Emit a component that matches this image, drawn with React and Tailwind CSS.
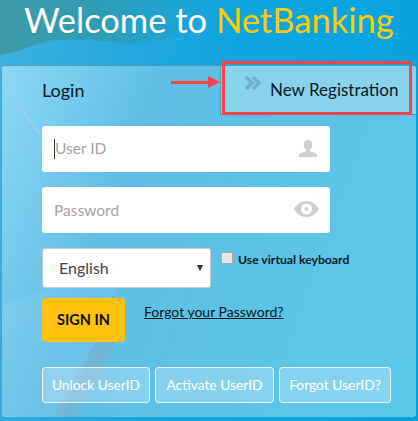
import React from "react";

const font = "font-['Lato','Open_Sans',sans-serif]";

function ActionBtn({ w, children }) {
  return (
    <div className={`${w} h-[36px] flex items-center justify-center rounded-[4px] border border-white/80 bg-white/25 text-[13.800px] text-white`}>
      {children}
    </div>
  );
}

export default function App() {
  return (
    <div className={`${font} relative w-[418px] h-[421px] overflow-hidden bg-[linear-gradient(100deg,#3fb0e0_0%,#28a8de_25%,#0ea5df_50%,#08a6e2_75%,#0aa0d8_100%)]`}>
      <svg width="418" height="70" viewBox="0 0 418 70" className="absolute left-0 top-0">
        <defs>
          <linearGradient id="teal" x1="0" y1="0" x2="1" y2="0">
            <stop offset="0" stopColor="#3f9aa8" />
            <stop offset="0.4" stopColor="#2f9cb6" />
            <stop offset="1" stopColor="#10a4dc" stopOpacity="0" />
          </linearGradient>
        </defs>
        <path d="M0 0H250C230 20 190 38 130 44C100 40 70 38 48 41C30 46 15 53 0 55Z" fill="url(#teal)" />
      </svg>

      <h1 className="relative h-[65px] pl-[24px] text-[34.500px] leading-[39px] text-white whitespace-nowrap">
        Welcome to <span className="text-[#ffcc00]">NetBanking</span>
      </h1>

      <div className="relative mx-[2px] h-[352px] overflow-hidden rounded-[3px] border-t border-[#4d9dbd] bg-[linear-gradient(110deg,#8cd8f4_0%,#5fbde6_30%,#5cc3e6_60%,#5cc8ec_100%)]">
        <svg width="414" height="352" viewBox="0 0 414 352" className="absolute left-0 top-0">
          <path d="M4 22L38 68" stroke="#a8cfe2" strokeWidth="2" fill="none" opacity="0.7" />
          <path d="M0 240L130 190L60 352H0Z" fill="#9fd6ee" opacity="0.2" />
          <path d="M50 352L100 265L120 270L72 352Z" fill="#8aa9bb" opacity="0.35" />
        </svg>

        <div className="relative flex h-[49px]">
          <div className="w-[218px] pl-[40px] pt-[12px] text-[18px] leading-[24px] text-[#0b1a24]">Login</div>
          <div className="flex-1 border-l border-b border-[#5b94ad] bg-[#88d3ec] pl-[23px] pt-[10px]">
            <div className="flex items-start text-[#0b1a24]">
              <svg width="18" height="14" viewBox="0 0 18 14" className="shrink-0" fill="none" stroke="#6fb0c8" strokeWidth="3.500">
                <path d="M2 1l6 6-6 6M9 1l6 6-6 6" />
              </svg>
              <span className="ml-[8px] mt-[2px] text-[17px] leading-[24px] whitespace-nowrap">New Registration</span>
            </div>
          </div>
        </div>

        <div className="relative pl-[40px] pt-[11px]">
          <div className="flex h-[46px] w-[288px] items-center justify-between rounded-[3px] bg-white pl-[12px] pr-[12px]">
            <div className="flex items-center text-[15.500px] text-[#a3a3a3]">
              <span className="h-[20px] w-px bg-[#333]" />
              <span>User ID</span>
            </div>
            <svg width="20" height="20" viewBox="0 0 20 20" fill="#cfcfcf">
              <path d="M10 1c-3 0-4.400 2.200-4.200 5 .1 2 .9 3.600 2.200 4.600v1.600c-2.600.9-6.500 1.800-7 3.800v2h18v-2c-.5-2-4.400-2.900-7-3.800v-1.600c1.300-1 2.100-2.600 2.200-4.600.2-2.800-1.200-5-4.200-5z" />
            </svg>
          </div>

          <div className="mt-[15px] flex h-[46px] w-[288px] items-center justify-between rounded-[3px] bg-white pl-[12px] pr-[11px]">
            <span className="mt-[2px] text-[15.500px] text-[#a3a3a3]">Password</span>
            <svg width="25" height="16" viewBox="0 0 25 16" fill="#cfcfcf" className="mb-[2px]">
              <path fillRule="evenodd" d="M12.500 0C7 0 2.500 3.500 0 8c2.500 4.500 7 8 12.500 8S22.500 12.500 25 8c-2.500-4.500-7-8-12.500-8zm0 2.500a5.500 5.500 0 1 1 0 11 5.500 5.500 0 0 1 0-11zm0 3.500a2 2 0 1 0 0 4 2 2 0 0 0 0-4z" />
            </svg>
          </div>

          <div className="mt-[15px] flex items-start">
            <div className="flex h-[40px] w-[169px] items-center justify-between rounded-[3px] border border-[#c8c8c8] bg-white pl-[16px] pr-[7px] pb-[1px] text-[16px] text-[#444]">
              <span>English</span>
              <svg width="6" height="6" viewBox="0 0 6 6" fill="#333"><path d="M0 0h6L3 6z" /></svg>
            </div>
            <div className="ml-[10px] mt-[4px] h-[12px] w-[12px] rounded-[2px] border border-[#aaa] bg-[#e6e6e6]" />
            <span className="ml-[5px] mt-[3px] text-[12.200px] leading-[18px] font-bold text-[#0b1a24] whitespace-nowrap">Use virtual keyboard</span>
          </div>

          <div className="mt-[10px] flex items-start">
            <div className="flex h-[44px] w-[83px] items-center justify-center rounded-[4px] bg-[#ffc20e] text-[14.500px] font-bold text-[#111]">SIGN IN</div>
            <a className="ml-[19px] mt-[4px] text-[14px] leading-[20px] text-[#0b1a24] underline whitespace-nowrap">Forgot your Password?</a>
          </div>

          <div className="mt-[25px] flex gap-[5px]">
            <ActionBtn w="w-[108px]">Unlock UserID</ActionBtn>
            <ActionBtn w="w-[119px]">Activate UserID</ActionBtn>
            <ActionBtn w="w-[112px]">Forgot UserID?</ActionBtn>
          </div>
        </div>
      </div>

      <div className="absolute left-[222px] top-[61px] h-[54px] w-[190px] border-[3px] border-[#f8434a]" />
      <div className="absolute left-[171px] top-[81px] h-[3px] w-[40px] bg-[#f8434a]" />
      <div className="absolute left-[208px] top-[76px] h-0 w-0 border-y-[6px] border-l-[12px] border-y-transparent border-l-[#f8434a]" />
    </div>
  );
}
